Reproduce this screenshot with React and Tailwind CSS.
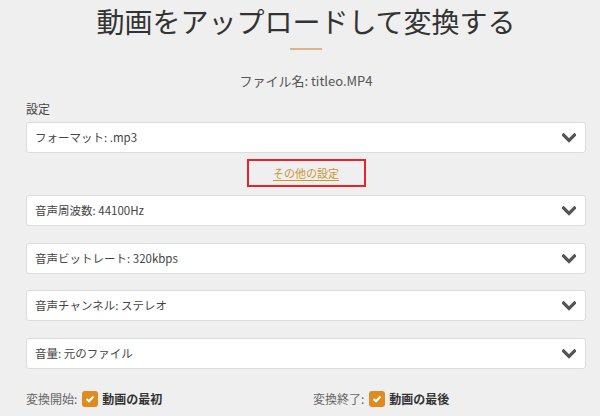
import React from "react";

const font = { fontFamily: '"Noto Sans CJK JP", "Noto Sans", sans-serif' };

function Chevron() {
  return (
    <svg width="14" height="10" viewBox="0 0 14 10" className="shrink-0">
      <path d="M1.5 2 L7 7.5 L12.5 2" fill="none" stroke="#555" strokeWidth="3.2" strokeLinecap="square" strokeLinejoin="miter" />
    </svg>
  );
}

function Select({ text, className = "" }) {
  return (
    <div className={"flex h-[31px] items-center justify-between rounded-[3px] border border-[#dcdcdc] bg-white pl-[8px] pr-[9px] " + className}>
      <span className="text-[11.5px] text-[#444]">{text}</span>
      <Chevron />
    </div>
  );
}

function Check() {
  return (
    <span className="flex h-[16px] w-[16px] items-center justify-center rounded-[3px] bg-[#de8b1f]">
      <svg width="10" height="8" viewBox="0 0 10 8">
        <path d="M1.5 4 L4 6.3 L8.5 1.5" fill="none" stroke="white" strokeWidth="2" />
      </svg>
    </span>
  );
}

export default function App() {
  return (
    <div className="h-[416px] w-[600px] overflow-hidden bg-[#efefef]" style={font}>
      <div className="ml-[26px] mr-[14px] flex flex-col">
        <h1 className="mt-[3px] text-center text-[28px] font-normal leading-[36px] text-[#333]">動画をアップロードして変換する</h1>
        <div className="mx-auto mt-[9px] h-[2px] w-[32px] bg-[#dcb58f]" />
        <div className="mt-[22px] text-center text-[13px] leading-[18px] text-[#555]">ファイル名: titleo.MP4</div>
        <div className="mt-[10px] text-[12px] leading-[18px] text-[#444]">設定</div>
        <Select text="フォーマット: .mp3" className="mt-[4px]" />
        <div className="mt-[6px] flex justify-center">
          <div className="flex h-[28px] w-[119px] items-center justify-center border-2 border-[#e8232a]">
            <span className="text-[11px] text-[#c9962f] underline underline-offset-2">その他の設定</span>
          </div>
        </div>
        <Select text="音声周波数: 44100Hz" className="mt-[8px]" />
        <Select text="音声ビットレート: 320kbps" className="mt-[17px]" />
        <Select text="音声チャンネル: ステレオ" className="mt-[16px]" />
        <Select text="音量: 元のファイル" className="mt-[17px]" />
        <div className="mt-[21px] flex items-center">
          <div className="flex w-[287px] items-center">
            <span className="text-[12px] text-[#666]">変換開始:</span>
            <span className="ml-[5px]"><Check /></span>
            <span className="ml-[4px] text-[12px] font-bold text-[#333]">動画の最初</span>
          </div>
          <div className="flex items-center">
            <span className="text-[12px] text-[#666]">変換終了:</span>
            <span className="ml-[5px]"><Check /></span>
            <span className="ml-[4px] text-[12px] font-bold text-[#333]">動画の最後</span>
          </div>
        </div>
      </div>
    </div>
  );
}
